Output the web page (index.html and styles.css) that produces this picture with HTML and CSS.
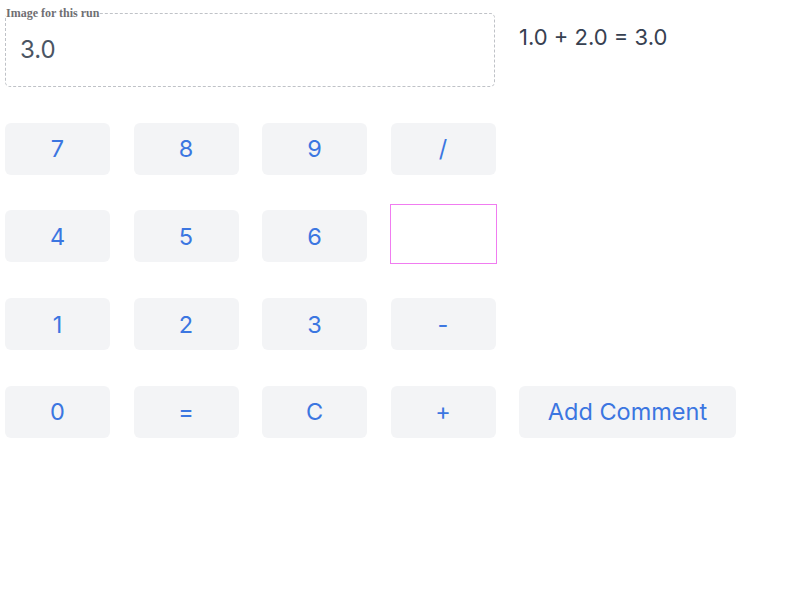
FILE: index.html
```html
<!DOCTYPE html>
<html>
<head>
<meta charset="utf-8">
<link rel="stylesheet" href="styles.css">
</head>
<body>
<div class="calc">
  <fieldset class="display">
    <legend>Image for this run</legend>
    <div class="value">3.0</div>
  </fieldset>
  <div class="result">1.0 + 2.0 = 3.0</div>

  <button class="key">7</button>
  <button class="key">8</button>
  <button class="key">9</button>
  <button class="key">/</button>
  <div class="spacer"></div>

  <button class="key">4</button>
  <button class="key">5</button>
  <button class="key">6</button>
  <div class="blank"></div>
  <div class="spacer"></div>

  <button class="key">1</button>
  <button class="key">2</button>
  <button class="key">3</button>
  <button class="key">-</button>
  <div class="spacer"></div>

  <button class="key">0</button>
  <button class="key">=</button>
  <button class="key">C</button>
  <button class="key">+</button>
  <button class="key wide">Add Comment</button>
</div>
</body>
</html>
```
FILE: styles.css
```css
html, body {
  margin: 0;
  padding: 0;
  background: #ffffff;
}
body {
  font-family: Inter, "Liberation Sans", sans-serif;
}
.calc {
  display: grid;
  grid-template-columns: 105px 105px 105px 105px auto;
  column-gap: 23.5px;
  row-gap: 35.7px;
  padding: 6px 0 0 5px;
  align-items: center;
  justify-items: start;
}
.display {
  grid-column: 1 / span 4;
  align-self: start;
  box-sizing: border-box;
  width: 490px;
  height: 81px;
  margin: 0;
  padding: 0 14px;
  border: 1px dashed #bfc2c7;
  border-radius: 5px;
}
.display legend {
  padding: 0;
  margin-left: -14px;
  font-family: "Liberation Serif", serif;
  font-size: 12px;
  font-weight: bold;
  color: #6f6f73;
}
.value {
  margin-top: 14px;
  font-size: 24px;
  color: #4b5563;
}
.result {
  align-self: start;
  margin-top: 18px;
  font-size: 22px;
  color: #374151;
}
.key {
  width: 105px;
  height: 52px;
  border: none;
  border-radius: 6px;
  background: #f3f4f6;
  color: #3b76e1;
  font-family: Inter, "Liberation Sans", sans-serif;
  font-size: 23.5px;
  padding: 0;
}
.key.wide {
  width: 217px;
}
.blank {
  box-sizing: border-box;
  width: 107px;
  height: 60px;
  margin: -6px 0 -2px -1px;
  border: 1.5px solid #f07cf0;
}
.spacer {
  width: 1px;
  height: 52px;
}
```
